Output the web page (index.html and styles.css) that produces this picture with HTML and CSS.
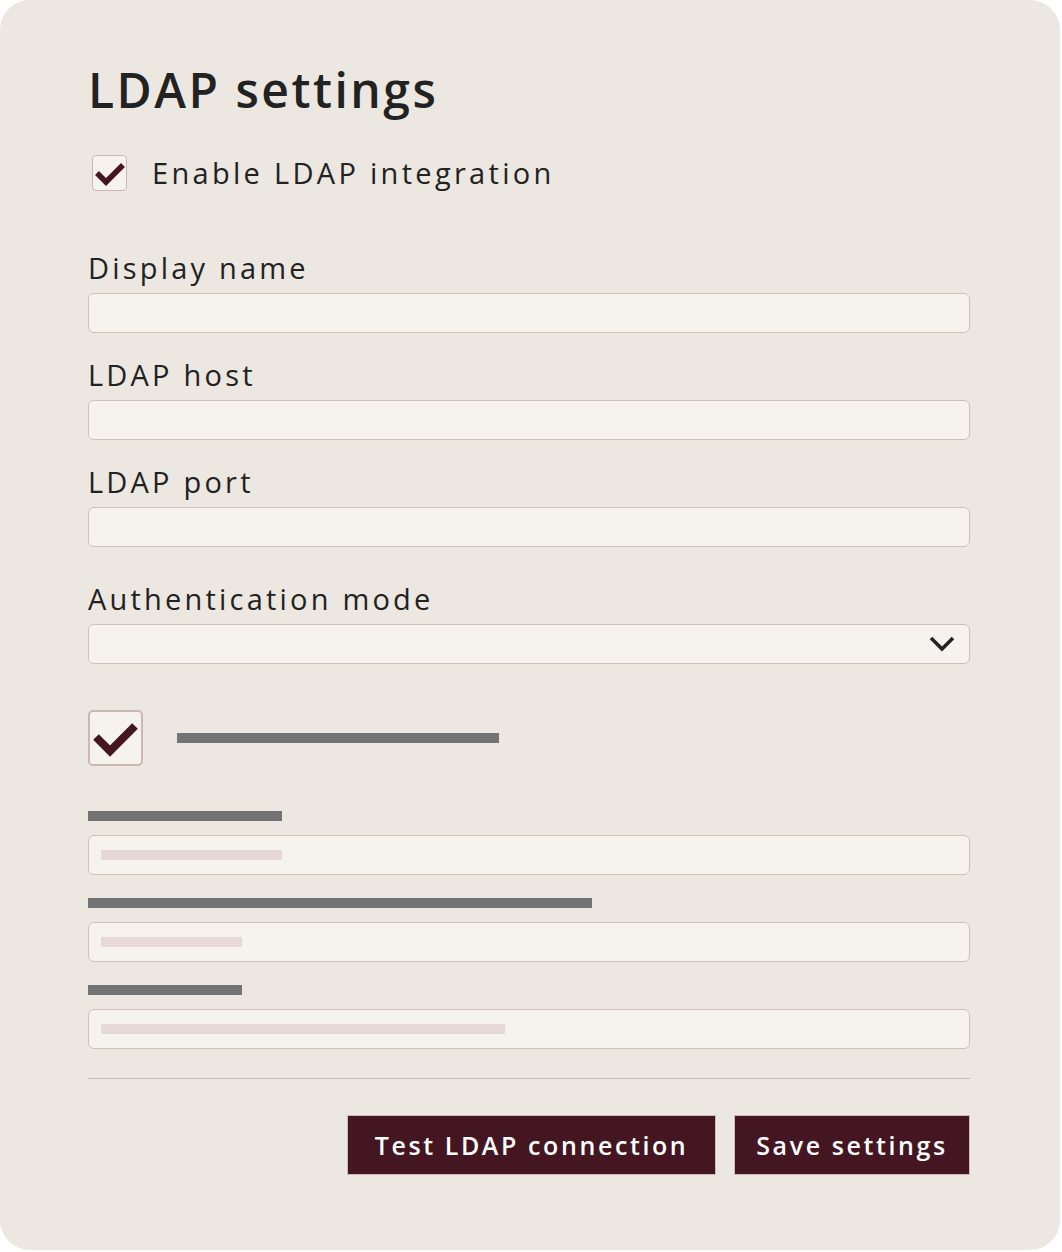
FILE: index.html
```html
<!DOCTYPE html>
<html lang="en">
<head>
    <meta charset="UTF-8">
    <meta name="viewport" content="width=device-width, initial-scale=1.0">
    <title>LDAP settings</title>
    <link rel="stylesheet" href="styles.css">
</head>
<body>
    <div class="card">
        <h1 class="title">LDAP settings</h1>

        <label class="check-row">
            <span class="box box-small">
                <svg viewBox="0 0 35 36" width="35" height="36">
                    <polyline points="5,18 14,27 31,10" fill="none" stroke="#44161f" stroke-width="5.5"/>
                </svg>
            </span>
            <span class="check-label">Enable LDAP integration</span>
        </label>

        <div class="fields">
            <div class="field">
                <label class="field-label">Display name</label>
                <div class="input"></div>
            </div>
            <div class="field">
                <label class="field-label">LDAP host</label>
                <div class="input"></div>
            </div>
            <div class="field">
                <label class="field-label">LDAP port</label>
                <div class="input"></div>
            </div>
            <div class="field field-select">
                <label class="field-label">Authentication mode</label>
                <div class="input select">
                    <svg class="chevron" viewBox="0 0 26 18" width="26" height="18">
                        <polyline points="2,3 13,14 24,3" fill="none" stroke="#222" stroke-width="3.5"/>
                    </svg>
                </div>
            </div>
        </div>

        <!-- options that load after the mode is chosen -->
        <div class="check-row check-row-big">
            <span class="box box-big">
                <svg viewBox="0 0 55 56" width="55" height="56">
                    <polyline points="8,27 22,41 47,16" fill="none" stroke="#44161f" stroke-width="8"/>
                </svg>
            </span>
            <span class="bar bar-text w-322"></span>
        </div>

        <div class="field field-loading">
            <span class="bar bar-text w-194"></span>
            <div class="input"><span class="bar bar-hint w-181"></span></div>
        </div>
        <div class="field field-loading">
            <span class="bar bar-text w-504"></span>
            <div class="input"><span class="bar bar-hint w-141"></span></div>
        </div>
        <div class="field field-loading">
            <span class="bar bar-text w-154"></span>
            <div class="input"><span class="bar bar-hint w-404"></span></div>
        </div>

        <hr class="divider">

        <div class="actions">
            <button class="btn btn-test">Test LDAP connection</button>
            <button class="btn btn-save">Save settings</button>
        </div>
    </div>
</body>
</html>
```

FILE: styles.css
```css
body {
    margin: 0;
    background-color: #ffffff;
    font-family: "Open Sans", "Noto Sans", sans-serif;
    color: #222222;
}
.card {
    width: 1060px;
    height: 1250px;
    box-sizing: border-box;
    background-color: #ece7e1;
    border-radius: 30px;
    padding: 61px 90px 0 88px;
}
.title {
    margin: 0;
    font-size: 48px;
    line-height: 58px;
    font-weight: 600;
    letter-spacing: 2.5px;
}
.check-row {
    display: flex;
    align-items: center;
    gap: 25px;
    margin-top: 36px;
    margin-left: 4px;
}
.check-label {
    font-size: 29px;
    line-height: 36px;
    font-weight: 500;
    letter-spacing: 3.3px;
}
.box {
    display: block;
    box-sizing: border-box;
    background-color: #f6f3ef;
    border: 1.5px solid #cbb8b1;
    border-radius: 4px;
    overflow: hidden;
}
.box svg {
    display: block;
    margin: -1.5px;
}
.box-small {
    width: 35px;
    height: 36px;
}
.box-big {
    width: 55px;
    height: 56px;
    border-width: 2px;
    border-radius: 5px;
}
.box-big svg {
    margin: -2px;
}
.fields {
    margin-top: 60px;
}
.field {
    margin-bottom: 25px;
}
.field-label {
    display: block;
    font-size: 29px;
    line-height: 34px;
    font-weight: 500;
    margin-bottom: 8px;
    letter-spacing: 3.2px;
}
.field-select {
    margin-top: 35px;
    margin-bottom: 0;
}
.input {
    height: 40px;
    box-sizing: border-box;
    background-color: #f6f3ef;
    border: 1px solid #cfc0b9;
    border-radius: 6px;
    display: flex;
    align-items: center;
    padding-left: 12px;
}
.select {
    justify-content: flex-end;
    padding-right: 14px;
}
.check-row-big {
    margin-top: 46px;
    margin-left: 0;
    gap: 34px;
}
.bar {
    display: block;
    height: 10px;
}
.bar-text {
    background-color: #737373;
}
.bar-hint {
    background-color: #e5d8d7;
}
.field-loading {
    margin-bottom: 23px;
}
.field-loading .bar-text {
    margin-bottom: 14px;
}
.check-row-big + .field-loading {
    margin-top: 45px;
}
.w-322 { width: 322px; }
.w-194 { width: 194px; }
.w-181 { width: 181px; }
.w-504 { width: 504px; }
.w-141 { width: 141px; }
.w-154 { width: 154px; }
.w-404 { width: 404px; }
.divider {
    border: 0;
    border-top: 1px solid #cdbcb6;
    margin: 29px 0 0;
}
.actions {
    display: flex;
    justify-content: flex-end;
    gap: 18px;
    margin-top: 36px;
}
.btn {
    height: 60px;
    padding: 0;
    background-color: #431621;
    color: #ffffff;
    border: 1px solid #cdbcb6;
    font-family: "Open Sans", "Noto Sans", sans-serif;
    font-size: 25px;
    font-weight: 600;
    letter-spacing: 2.6px;
}
.btn-test {
    width: 369px;
}
.btn-save {
    width: 236px;
}
```
